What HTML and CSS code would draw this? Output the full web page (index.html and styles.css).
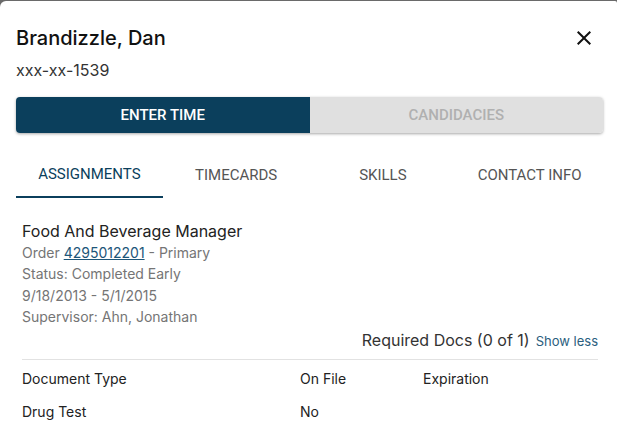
FILE: index.html
```html
<!DOCTYPE html>
<html lang="en">
<head>
<meta charset="utf-8">
<title>Brandizzle, Dan</title>
<link rel="stylesheet" href="styles.css">
</head>
<body>
<div class="modal">
  <div class="header">
    <div>
      <h2 class="name">Brandizzle, Dan</h2>
      <div class="ssn">xxx-xx-1539</div>
    </div>
    <button class="close" aria-label="Close">
      <svg width="24" height="24" viewBox="0 0 24 24"><path d="M19 6.41 17.59 5 12 10.59 6.41 5 5 6.41 10.59 12 5 17.59 6.41 19 12 13.41 17.59 19 19 17.59 13.41 12z" fill="#111"/></svg>
    </button>
  </div>

  <div class="segmented">
    <button class="seg active">ENTER TIME</button>
    <button class="seg">CANDIDACIES</button>
  </div>

  <div class="tabs">
    <div class="tab active">ASSIGNMENTS</div>
    <div class="tab">TIMECARDS</div>
    <div class="tab">SKILLS</div>
    <div class="tab">CONTACT INFO</div>
  </div>

  <div class="panel">
    <div class="job">Food And Beverage Manager</div>
    <div class="meta">Order <a href="#">4295012201</a> - Primary</div>
    <div class="meta">Status: Completed Early</div>
    <div class="meta">9/18/2013 - 5/1/2015</div>
    <div class="meta">Supervisor: Ahn, Jonathan</div>

    <div class="req">
      <span class="req-title">Required Docs (0 of 1)</span>
      <a href="#" class="show">Show less</a>
    </div>

    <div class="table">
      <div class="row head">
        <div>Document Type</div>
        <div>On File</div>
        <div>Expiration</div>
      </div>
      <div class="row">
        <div>Drug Test</div>
        <div>No</div>
        <div></div>
      </div>
    </div>
  </div>
</div>
</body>
</html>
```

FILE: styles.css
```css
html, body {
  margin: 0;
  padding: 0;
  height: 100%;
  overflow: hidden;
}
body {
  background: #6a6a6a;
  font-family: Inter, "Noto Sans", sans-serif;
}
.modal {
  margin-top: 1px;
  background: #fff;
  border-top-left-radius: 6px;
  border-top-right-radius: 2px;
  height: 100%;
  padding: 25px 14px 0 16px;
  box-sizing: border-box;
}
.header {
  display: flex;
  justify-content: space-between;
  align-items: flex-start;
}
.name {
  margin: 0;
  font-size: 20px;
  line-height: 24px;
  font-weight: 500;
  color: #111;
}
.ssn {
  margin-top: 10px;
  font-size: 16px;
  line-height: 20px;
  color: #333;
}
.close {
  border: 0;
  background: none;
  padding: 0;
  width: 24px;
  height: 24px;
  margin-right: 7px;
  cursor: pointer;
}
.close svg { display: block; }

.segmented {
  display: flex;
  margin-top: 17px;
  height: 36px;
  border-radius: 4px;
  overflow: hidden;
  box-shadow: 0 1px 3px rgba(0,0,0,0.35);
}
.seg {
  flex: 1;
  border: 0;
  font-family: Roboto, sans-serif;
  font-size: 15px;
  font-weight: 500;
  background: #e0e0e0;
  color: #b0b0b0;
  padding: 0;
}
.seg.active {
  background: #0b3f5c;
  color: #fff;
}

.tabs {
  display: flex;
  margin-top: 16px;
}
.tab {
  flex: 1;
  height: 49px;
  display: flex;
  align-items: center;
  justify-content: center;
  font-family: Roboto, sans-serif;
  font-size: 15px;
  color: #555;
  box-sizing: border-box;
  padding-top: 3px;
  padding-bottom: 1px;
}
.tab.active {
  color: #0b3f5c;
  border-bottom: 2px solid #0b3f5c;
  padding-bottom: 0;
}

.panel {
  padding: 22px 5px 0 6px;
}
.job {
  font-size: 16px;
  line-height: 22px;
  color: #222;
}
.meta {
  font-size: 14px;
  line-height: 21.3px;
  color: #757575;
}
.meta a {
  color: #1d5679;
}
.req {
  display: flex;
  justify-content: flex-end;
  align-items: baseline;
  gap: 6px;
  margin-top: 1px;
  padding-bottom: 7px;
  border-bottom: 1px solid #e2e2e2;
}
.req-title {
  font-size: 16px;
  line-height: 24px;
  color: #333;
}
.show {
  font-size: 13px;
  color: #2b5e7e;
  text-decoration: none;
}
.table {
  font-size: 14px;
  color: #222;
}
.row {
  display: grid;
  grid-template-columns: 278px 123px 1fr;
  line-height: 20px;
  padding-top: 9px;
  padding-bottom: 4px;
}
```
